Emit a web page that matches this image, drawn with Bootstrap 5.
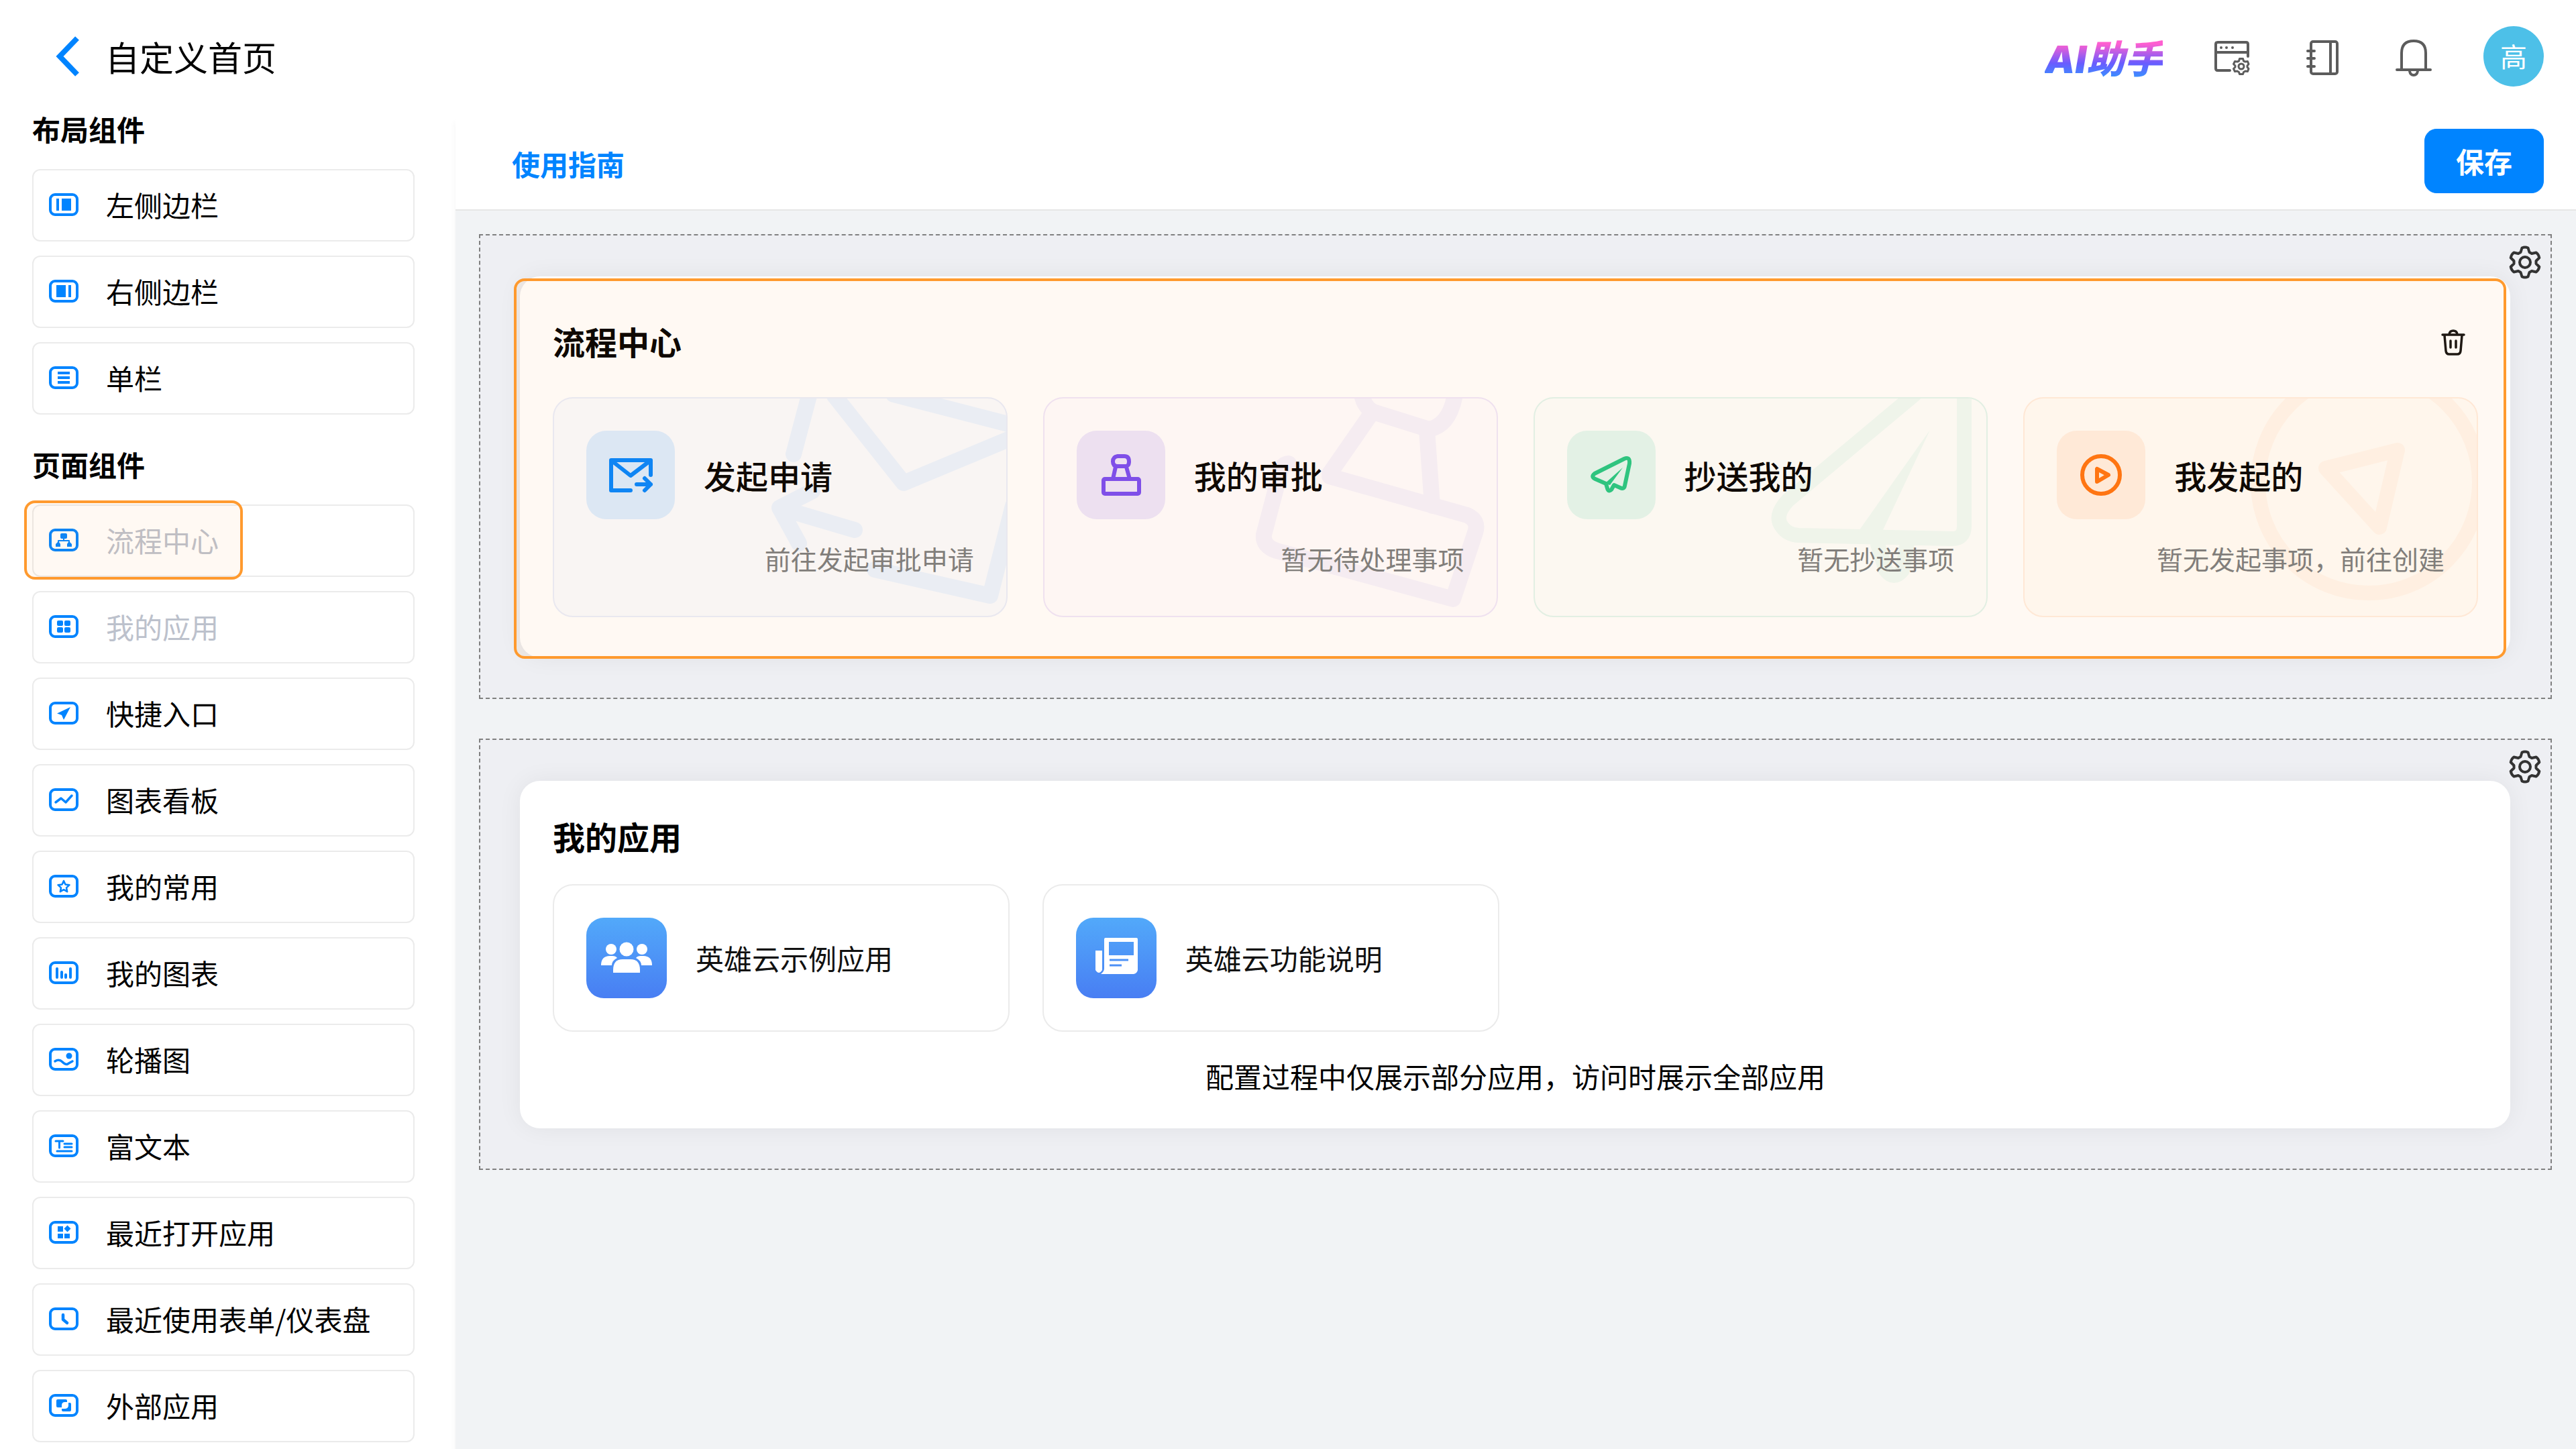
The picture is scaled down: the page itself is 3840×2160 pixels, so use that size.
<!DOCTYPE html>
<html lang="zh-CN" class="h-100">
<head>
<meta charset="utf-8">
<meta name="viewport" content="width=device-width, initial-scale=1">
<title>自定义首页</title>
<link href="https://cdn.jsdelivr.net/npm/bootstrap@5.3.0/dist/css/bootstrap.min.css" rel="stylesheet">
<style>
  :root { --brand: #0084ff; --hl: #ff9a2e; }
  body { font-family: "Noto Sans CJK SC", sans-serif; font-size: 42px; line-height: 60px; color: #000; background: #fff; }
  h1, h2, p, ul { margin: 0; }
  a { text-decoration: none; }
  svg { display: block; flex: none; }
  .icon-btn { border: 0; background: none; padding: 0; }
  .app-header { height: 172px; padding: 0 48px 4px 83px; }
  .head-left { gap: 38px; }
  .page-title { font-size: 51px; line-height: 72px; font-weight: 400; }
  .back-link { color: var(--brand); }
  .header-tools { gap: 76px; }
  .tool-icons { gap: 83px; }
  .ai-logo { font-family: Inter, "Noto Sans CJK SC", sans-serif; font-size: 57px; line-height: 76px; font-weight: 900; font-style: italic; padding-top: 10px;
    background: linear-gradient(180deg, #ff5fd0 28%, #6a5cff 62%, #3e8bff 84%); -webkit-background-clip: text; background-clip: text; color: transparent; }
  .avatar { width: 90px; height: 90px; background: #4dc0e8; color: #fff; font-size: 40px; padding-bottom: 2px; }

  .side { width: 679px; padding: 0 61px 8px 48px; flex: none; }
  .side-title { font-size: 42px; line-height: 40px; font-weight: 700; margin-bottom: 40px; }
  .side-list { gap: 21px; }
  .side-list + .side-title { margin-top: 54px; }
  .side-item { height: 108px; width: 100%; border: 2px solid #ebebeb; border-radius: 12px; background: #fff; padding: 0 22px 3px; gap: 40px; color: #000; text-align: left; }
  .side-item svg { color: var(--brand); }
  .side-item:disabled { color: #bcc1cc; }
  .spot { position: absolute; border: 4px solid var(--hl); background: rgba(255,154,46,.06); pointer-events: none; }
  .spot-side { left: -12px; top: -6px; bottom: -4px; width: 326px; border-radius: 16px; }
  .spot-card { left: -9px; right: 6px; top: 3px; bottom: -2px; border-radius: 16px; }

  .work { background: #f1f3f5; box-shadow: -2px 10px 8px rgba(0,0,0,.03); }
  .toolbar { height: 142px; background: #fff; border-bottom: 2px solid #e6e6e6; padding: 0 48px 4px 84px; }
  .guide-link { color: var(--brand); font-weight: 700; padding-top: 8px; }
  .save-btn { --bs-btn-bg: #0084ff; --bs-btn-border-color: #0084ff; width: 178px; height: 96px; font-size: 42px; font-weight: 700; border-radius: 18px; padding: 0 0 2px; }
  .canvas-area { padding: 35px 36px 35px 35px; gap: 59px; }
  .zone { border: 2px dashed #808080; background: #eeeff3; padding: 61px 60px 60px 59px; }
  .zone-gear { position: absolute; right: 13px; top: 15px; color: #333; }
  .panel { background: #fff; border-radius: 30px; box-shadow: 0 0 36px rgba(0,0,0,.06); padding: 60px 48px 60px 49px; }
  .panel-apps { padding: 46px 48px 48px 49px; }
  .panel-title { font-size: 48px; line-height: 72px; font-weight: 700; }
  .trash-btn { margin-right: 18px; padding-top: 4px; color: #111; }
  .tiles { display: grid; grid-template-columns: repeat(4, 1fr); }
  .flow-tiles { gap: 53px; margin-top: 48px; }
  .app-tiles { gap: 49px; margin-top: 36px; }
  .flow-tile { height: 328px; border: 2px solid; border-radius: 30px; padding: 48px; overflow: hidden; color: #000; }
  .flow-tile:hover, .app-tile:hover { color: #000; }
  .flow-mark { position: absolute; right: 0; top: 0; fill: none; stroke: currentColor; stroke-width: 24; stroke-linecap: round; stroke-linejoin: round; }
  .flow-ico { width: 132px; height: 132px; border-radius: 30px; }
  .flow-ico svg { fill: none; stroke: currentColor; stroke-width: 6; stroke-linecap: round; stroke-linejoin: round; }
  .flow-head { gap: 43px; position: relative; }
  .flow-name { font-size: 48px; font-weight: 500; }
  .flow-note { font-size: 39px; line-height: 56px; color: #7a7d80; position: relative; margin-top: 30px; text-align: right; }
  .t-blue { background: #f9fbff; border-color: #e8edfb; } .t-blue .flow-ico { background: #daecff; color: #0084ff; } .t-blue .flow-mark { color: #e9f3ff; }
  .t-violet { background: #fefcff; border-color: #efe6fb; } .t-violet .flow-ico { background: #ece5fc; color: #784bf4; } .t-violet .flow-mark { color: #f5f2fd; }
  .t-green { background: #fcfefd; border-color: #e1f5ee; } .t-green .flow-ico { background: #e2f7f1; color: #22c784; } .t-green .flow-mark { color: #eefaf6; stroke-width: 22; }
  .t-orange { background: #fffcf8; border-color: #ffede0; } .t-orange .flow-ico { background: #ffeee2; color: #ff7310; } .t-orange .flow-mark { color: #fff5ec; stroke-width: 22; }
  .app-tile { height: 220px; border: 2px solid #ebebeb; border-radius: 30px; padding: 0 48px; gap: 43px; color: #111; }
  .app-ico { border-radius: 26px; background: linear-gradient(180deg, #52a9fa, #487ef3); color: #fff; fill: currentColor; }
  .app-note { margin-top: 36px; }
</style>
</head>
<body class="d-flex flex-column min-vh-100">
<svg width="0" height="0" class="position-absolute" aria-hidden="true">
  <symbol id="frame" viewBox="0 0 46 36"><rect x="3" y="3" width="40" height="30" rx="7" fill="none" stroke="currentColor" stroke-width="4"/></symbol>
  <symbol id="gear" viewBox="0 0 50 50"><g fill="none" stroke="currentColor" stroke-width="4" stroke-linejoin="round"><path d="M20.5 3.500Q25 1.500 29.500 3.500L31.500 10L35 12L41.700 10.500Q45.500 13.500 46.300 18.300L41.500 23V27L46.300 31.700Q45.500 36.500 41.700 39.500L35 38L31.500 40L29.500 46.500Q25 48.500 20.500 46.500L18.500 40L15 38L8.300 39.500Q4.500 36.500 3.700 31.700L8.500 27V23L3.700 18.300Q4.500 13.500 8.300 10.500L15 12L18.500 10Z"/><circle cx="25" cy="25" r="8"/></g></symbol>
</svg>

<header class="app-header d-flex justify-content-between align-items-center">
  <div class="head-left d-flex align-items-center">
    <a href="#" class="back-link" aria-label="返回"><svg width="36" height="60" viewBox="0 0 36 60" fill="none" stroke="currentColor" stroke-width="8"><path d="M32 3 6 30 32 57"/></svg></a>
    <h1 class="page-title">自定义首页</h1>
  </div>
  <div class="header-tools d-flex align-items-center">
    <a href="#" class="ai-logo">AI助手</a>
    <div class="tool-icons d-flex align-items-center pt-1">
      <button type="button" class="icon-btn" aria-label="页面设置"><svg width="54" height="54" viewBox="0 0 54 54" fill="none" stroke="#5c5c5c" stroke-width="4" stroke-linecap="round" stroke-linejoin="round"><path d="M24 46H6Q3 46 3 43V7Q3 4 6 4H48Q51 4 51 7V25M3 19H51"/><g fill="#5c5c5c" stroke="none"><circle cx="11" cy="12" r="2"/><circle cx="19" cy="12" r="2"/><circle cx="28" cy="12" r="2"/></g><path stroke-width="3" d="M38.500 28.500H43.500L44.500 32 47 33 50.500 32.500 52 36.500 50 39V41L52 43.500 50.500 47.500 47 47 44.500 48.500 43.500 51.500H38.500L37.500 48.500 35 47 31.500 47.500 29.500 43.500 32 41V39L29.500 36.500 31.500 32.500 35 33 37.500 32Z"/><circle cx="41" cy="40" r="4" stroke-width="3"/></svg></button>
      <button type="button" class="icon-btn" aria-label="通讯录"><svg width="50" height="54" viewBox="0 0 50 54" fill="none" stroke="#5c5c5c" stroke-width="4" stroke-linecap="round" stroke-linejoin="round"><rect x="8" y="3" width="39" height="48" rx="3"/><path d="M37 3V51M3 17H13M3 28H13M3 40H13"/></svg></button>
      <button type="button" class="icon-btn" aria-label="通知"><svg width="56" height="56" viewBox="0 0 56 56" fill="none" stroke="#5c5c5c" stroke-width="4" stroke-linecap="round"><path d="M10 46V21Q10 3 28 3T46 21V46M3 46H53M22 48Q23 54 28 54T34 48"/></svg></button>
    </div>
    <a href="#" class="avatar rounded-circle d-flex align-items-center justify-content-center">高</a>
  </div>
</header>

<div class="d-flex flex-grow-1">
  <aside class="side">
    <h2 class="side-title">布局组件</h2>
    <ul class="side-list list-unstyled d-flex flex-column">
      <li><button type="button" class="side-item d-flex align-items-center"><svg width="46" height="36" fill="currentColor"><use href="#frame"/><path d="M12 9h4v18h-4zM20 9h14v18H20z"/></svg>左侧边栏</button></li>
      <li><button type="button" class="side-item d-flex align-items-center"><svg width="46" height="36" fill="currentColor"><use href="#frame"/><path d="M12 9h14v18H12zM30 9h4v18h-4z"/></svg>右侧边栏</button></li>
      <li><button type="button" class="side-item d-flex align-items-center"><svg width="46" height="36" fill="currentColor"><use href="#frame"/><path d="M14 9h18v4H14zM14 16h18v4H14zM14 23h18v4H14z"/></svg>单栏</button></li>
    </ul>
    <h2 class="side-title">页面组件</h2>
    <ul class="side-list list-unstyled d-flex flex-column">
      <li class="position-relative"><button type="button" disabled class="side-item d-flex align-items-center"><svg width="46" height="36" fill="currentColor"><use href="#frame"/><rect x="18" y="8" width="10" height="8" rx="2"/><path d="M22 15h2v3h7q1 0 1 1v2l3 3v4h-7v-4l2-3v-1H16v1l2 3v4h-7v-4l3-3v-2q0-1 1-1h7z"/></svg>流程中心</button><div class="spot spot-side"></div></li>
      <li><button type="button" disabled class="side-item d-flex align-items-center"><svg width="46" height="36" fill="currentColor"><use href="#frame"/><rect x="13" y="9" width="9" height="8" rx="2"/><rect x="24" y="9" width="9" height="8" rx="2"/><rect x="13" y="19" width="9" height="8" rx="2"/><rect x="24" y="19" width="9" height="8" rx="2"/></svg>我的应用</button></li>
      <li><button type="button" class="side-item d-flex align-items-center"><svg width="46" height="36" fill="currentColor"><use href="#frame"/><path d="M33 9 13 18.500 20 21 23 28Z"/></svg>快捷入口</button></li>
      <li><button type="button" class="side-item d-flex align-items-center"><svg width="46" height="36" fill="none" stroke="currentColor" stroke-width="3.500" stroke-linecap="round" stroke-linejoin="round"><use href="#frame"/><path d="M11 22 19 16 26 22 35 12"/></svg>图表看板</button></li>
      <li><button type="button" class="side-item d-flex align-items-center"><svg width="46" height="36" fill="none" stroke="currentColor" stroke-width="2.500" stroke-linejoin="round"><use href="#frame"/><path d="M23 10 25.500 15.500 31.500 16.200 27 20.300 28.200 26.200 23 23.200 17.800 26.200 19 20.300 14.500 16.200 20.500 15.500Z"/></svg>我的常用</button></li>
      <li><button type="button" class="side-item d-flex align-items-center"><svg width="46" height="36" fill="none" stroke="currentColor" stroke-width="4" stroke-linecap="round"><use href="#frame"/><path d="M13 12V25M20 17V25M26 21V25M33 12V25"/></svg>我的图表</button></li>
      <li><button type="button" class="side-item d-flex align-items-center"><svg width="46" height="36" fill="none" stroke="currentColor" stroke-width="3.500" stroke-linecap="round"><use href="#frame"/><path d="M10 21Q16 17 21 22T29 25T36 21"/><circle cx="31" cy="13" r="4.500" fill="currentColor" stroke="none"/></svg>轮播图</button></li>
      <li><button type="button" class="side-item d-flex align-items-center"><svg width="46" height="36" fill="none" stroke="currentColor" stroke-width="3" stroke-linecap="round"><use href="#frame"/><path d="M11 11H22M16.500 11V21M24 15H35M24 20H35M13 26H35"/></svg>富文本</button></li>
      <li><button type="button" class="side-item d-flex align-items-center"><svg width="46" height="36" fill="currentColor"><use href="#frame"/><path d="M14 9h8v8h-8zM14 20h8v7h-8zM24 20h8v7h-8zM28.500 7.500l5 5-5 5-5-5z"/></svg>最近打开应用</button></li>
      <li><button type="button" class="side-item d-flex align-items-center"><svg width="46" height="36" fill="none" stroke="currentColor" stroke-width="4.500" stroke-linecap="round" stroke-linejoin="round"><use href="#frame"/><path d="M22 12V19L28 24"/></svg>最近使用表单/仪表盘</button></li>
      <li><button type="button" class="side-item d-flex align-items-center"><svg width="46" height="36" fill="currentColor"><use href="#frame"/><path d="M14 9h12q2 0 2 2v2h-3q-5 0-5 5v3h-6q-2 0-2-2v-8q0-2 2-2z"/><path d="M30 14h2q2 0 2 2v9q0 2-2 2H22q-2 0-2-2v-2h4q6 0 6-5z"/></svg>外部应用</button></li>
    </ul>
  </aside>

  <main class="work flex-grow-1">
    <div class="toolbar d-flex justify-content-between align-items-center">
      <a href="#" class="guide-link">使用指南</a>
      <button type="button" class="btn btn-primary save-btn">保存</button>
    </div>
    <div class="canvas-area d-flex flex-column">
      <section class="zone position-relative">
        <button type="button" class="icon-btn zone-gear" aria-label="设置"><svg width="50" height="50"><use href="#gear"/></svg></button>
        <div class="panel position-relative">
          <div class="d-flex justify-content-between align-items-center">
            <h2 class="panel-title">流程中心</h2>
            <button type="button" class="icon-btn trash-btn" aria-label="删除"><svg width="38" height="40" viewBox="0 0 38 40" fill="none" stroke="currentColor" stroke-width="3.500" stroke-linecap="round" stroke-linejoin="round"><path d="M3 9H35M13 8Q14 3 19 3T25 8M6 10 8 33Q8.500 38 13 38H25Q29.500 38 30 33L32 10M15 18V28M23 18V28"/></svg></button>
          </div>
          <div class="tiles flow-tiles">
            <a href="#" class="flow-tile t-blue position-relative">
              <svg class="flow-mark" width="674" height="324" viewBox="0 0 674 324"><path d="M380-4 357 83M418-4 521 126 684 58M506-6 684 40M385 138 336 163 365 216M336 163 448 196M478 255 650 294 684 160"/></svg>
              <div class="flow-head d-flex align-items-center"><span class="flow-ico"><svg width="132" height="132"><path d="M66 89H37V44H96V66M38 45 66 67 95 45M75 80H96M87 71 96 80 87 89"/></svg></span><span class="flow-name">发起申请</span></div>
              <p class="flow-note">前往发起审批申请</p>
            </a>
            <a href="#" class="flow-tile t-violet position-relative">
              <svg class="flow-mark" width="674" height="324" viewBox="0 0 674 324"><path d="M473-6Q476 12 490 20L573 46Q604 40 612-6M484 27 425 112M570 47 578 160M364 97Q355 98 352 108L327 203Q325 220 346 227L609 299 642 200Q648 182 630 174L425 116"/></svg>
              <div class="flow-head d-flex align-items-center"><span class="flow-ico"><svg width="132" height="132"><path d="M61 38H71Q78 38 78 46T71 53H61Q54 53 54 46T61 38ZM58 54 54 72M74 54 79 72"/><rect x="40" y="72" width="53" height="22" rx="2"/></svg></span><span class="flow-name">我的审批</span></div>
              <p class="flow-note">暂无待处理事项</p>
            </a>
            <a href="#" class="flow-tile t-green position-relative">
              <svg class="flow-mark" width="674" height="324" viewBox="0 0 674 324"><path d="M567-6 378 152Q356 176 370 192 378 203 394 204L622 209Q641 210 641 190V-6M511 214 524 256Q536 272 549 256L556 214"/><path d="M590 47 482 200H518Z" fill="currentColor" stroke="none"/></svg>
              <div class="flow-head d-flex align-items-center"><span class="flow-ico"><svg width="132" height="132"><path d="M41 64 85 42Q94 38 93 49L86 82Q85 88 79 85L70 81 66 88Q62 92 60 86L58 79 42 72Q35 69 41 64Z"/><path d="M83 55 56 79 64 81Z" fill="currentColor" stroke="none"/></svg></span><span class="flow-name">抄送我的</span></div>
              <p class="flow-note">暂无抄送事项</p>
            </a>
            <a href="#" class="flow-tile t-orange position-relative">
              <svg class="flow-mark" width="674" height="324" viewBox="0 0 674 324"><circle cx="513" cy="125" r="165"/><path d="M449 104 556 77 529 192Z"/></svg>
              <div class="flow-head d-flex align-items-center"><span class="flow-ico"><svg width="132" height="132"><circle cx="66" cy="66" r="28"/><path d="M60 57V76L77 66Z"/></svg></span><span class="flow-name">我发起的</span></div>
              <p class="flow-note">暂无发起事项，前往创建</p>
            </a>
          </div>
          <div class="spot spot-card"></div>
        </div>
      </section>

      <section class="zone position-relative">
        <button type="button" class="icon-btn zone-gear" aria-label="设置"><svg width="50" height="50"><use href="#gear"/></svg></button>
        <div class="panel panel-apps">
          <h2 class="panel-title">我的应用</h2>
          <div class="tiles app-tiles">
            <a href="#" class="app-tile d-flex align-items-center"><svg class="app-ico" width="120" height="120"><circle cx="37" cy="47" r="8"/><circle cx="83" cy="47" r="8"/><path d="M22 71Q22 57 35 57H39Q44 57 46 60 38 64 38 71ZM98 71Q98 57 85 57H81Q76 57 74 60 82 64 82 71Z"/><circle cx="60" cy="47" r="10.500"/><path d="M40 82V78Q40 62 54 62H66Q80 62 80 78V82Z"/></svg>英雄云示例应用</a>
            <a href="#" class="app-tile d-flex align-items-center"><svg class="app-ico" width="120" height="120"><path fill-rule="evenodd" d="M44 30H90Q92 30 92 32V78Q91 83 86 84H37Q42 80 42 76V32Q42 30 44 30ZM49 36V56H86V36ZM50 61.500V64.500H78V61.500ZM50 69.500V72.500H68V69.500Z"/><path d="M29 49H39V78Q34 86 29 78Z"/></svg>英雄云功能说明</a>
          </div>
          <p class="app-note text-center">配置过程中仅展示部分应用，访问时展示全部应用</p>
        </div>
      </section>
    </div>
  </main>
</div>
<script src="https://cdn.jsdelivr.net/npm/bootstrap@5.3.0/dist/js/bootstrap.bundle.min.js"></script>
</body>
</html>
